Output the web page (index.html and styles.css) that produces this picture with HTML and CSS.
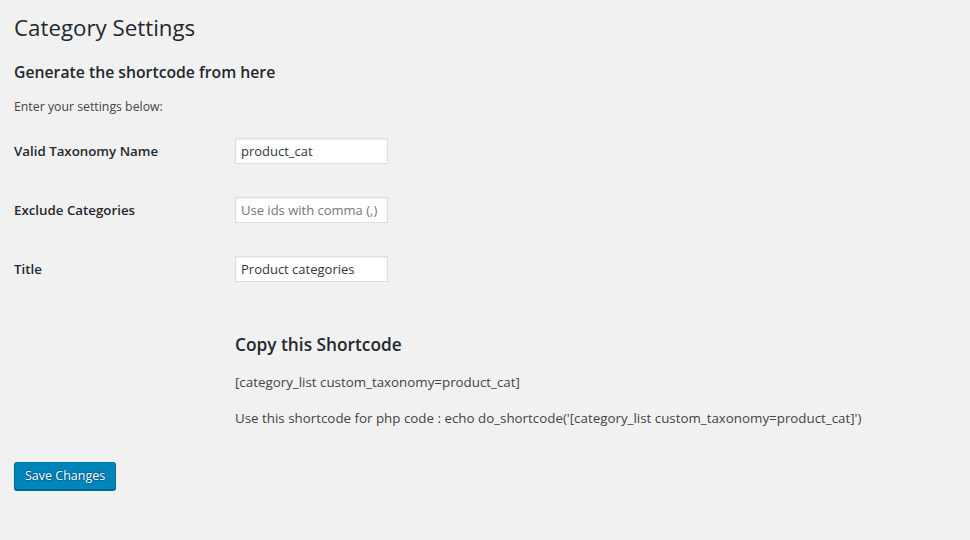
FILE: index.html
```html
<!DOCTYPE html>
<html lang="en">
<head>
<meta charset="utf-8">
<title>Category Settings</title>
<link rel="stylesheet" href="styles.css">
</head>
<body>
<div class="wrap">
  <h1 class="page-title">Category Settings</h1>
  <form class="settings-form">
    <h2 class="section-title">Generate the shortcode from here</h2>
    <p class="intro">Enter your settings below:</p>
    <div class="form-table">
      <div class="row">
        <label class="row-label" for="tax">Valid Taxonomy Name</label>
        <div class="row-field"><input id="tax" class="text-input" type="text" value="product_cat"></div>
      </div>
      <div class="row">
        <label class="row-label" for="excl">Exclude Categories</label>
        <div class="row-field"><input id="excl" class="text-input" type="text" placeholder="Use ids with comma (,)"></div>
      </div>
      <div class="row">
        <label class="row-label" for="title">Title</label>
        <div class="row-field"><input id="title" class="text-input" type="text" value="Product categories"></div>
      </div>
      <div class="row row-shortcode">
        <div class="row-label"></div>
        <div class="row-field">
          <h2 class="shortcode-title">Copy this Shortcode</h2>
          <p class="shortcode-line shortcode-first">[category_list custom_taxonomy=product_cat]</p>
          <p class="shortcode-line">Use this shortcode for php code : echo do_shortcode('[category_list custom_taxonomy=product_cat]')</p>
        </div>
      </div>
    </div>
    <div class="submit">
      <button type="button" class="button-primary">Save Changes</button>
    </div>
  </form>
</div>
</body>
</html>
```
FILE: styles.css
```css
html, body {
  margin: 0;
  padding: 0;
  background: #f1f1f1;
}
body {
  font-family: "Open Sans", "Noto Sans", sans-serif;
  font-size: 13px;
  color: #444;
  width: 970px;
  height: 540px;
  overflow: hidden;
}
.wrap {
  padding: 0 14px;
}
.page-title {
  margin: 0;
  padding: 13px 0 0;
  font-size: 22.3px;
  font-weight: 400;
  line-height: 30px;
  color: #23282d;
}
.section-title {
  margin: 17px 0 0;
  font-size: 15.75px;
  font-weight: 600;
  line-height: 24px;
  color: #23282d;
}
.intro {
  margin: 14px 0 0;
  font-size: 12.3px;
  line-height: 18px;
}
.form-table {
  display: flex;
  flex-direction: column;
  margin-top: 5px;
}
.row {
  display: flex;
  align-items: center;
  height: 59px;
}
.row-label {
  width: 221px;
  flex: none;
  font-size: 13.3px;
  font-weight: 600;
  color: #23282d;
}
.text-input {
  box-sizing: border-box;
  width: 153px;
  height: 26px;
  margin: 0;
  padding: 1px 5px 0;
  border: 1px solid #ddd;
  box-shadow: inset 0 1px 2px rgba(0,0,0,.07);
  background: #fff;
  font-family: inherit;
  font-size: 13px;
  color: #32373c;
  outline: none;
}
.text-input::placeholder {
  color: #72777c;
}
.row-shortcode {
  height: auto;
  align-items: flex-start;
  padding-top: 35px;
}
.shortcode-title {
  margin: 0;
  font-size: 17.3px;
  font-weight: 600;
  line-height: 24px;
  color: #23282d;
}
.shortcode-line {
  margin: 16px 0 0;
  font-size: 13.35px;
  line-height: 20px;
}
.shortcode-first {
  margin-top: 15px;
}
.submit {
  margin-top: 34px;
}
.button-primary {
  box-sizing: border-box;
  height: 28px;
  padding: 0 10px 1px;
  border: 1px solid;
  border-color: #0073aa #006799 #006799;
  border-radius: 3px;
  background: #0085ba;
  box-shadow: 0 1px 0 #006799;
  color: #fff;
  font-family: inherit;
  font-size: 12.5px;
  line-height: 26px;
  text-shadow: 0 -1px 1px #006799, 1px 0 1px #006799, 0 1px 1px #006799, -1px 0 1px #006799;
  cursor: pointer;
}
```
